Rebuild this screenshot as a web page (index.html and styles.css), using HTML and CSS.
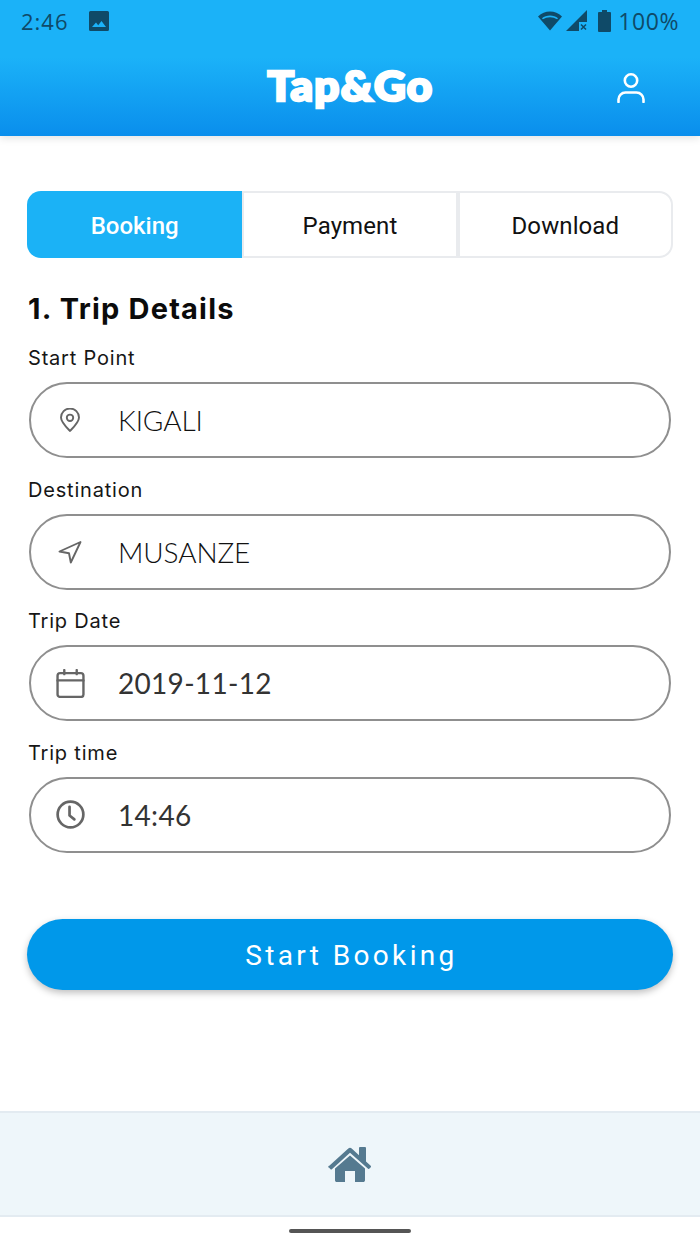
FILE: index.html
```html
<!DOCTYPE html>
<html lang="en">
<head>
<meta charset="utf-8">
<title>Tap&amp;Go</title>
<link rel="stylesheet" href="styles.css">
</head>
<body>
<div class="app">
  <header class="header">
    <div class="status">
      <div class="status-left">
        <span class="clock">2:46</span>
        <svg class="st-img" viewBox="0 0 20 20"><path d="M1.5 0h17A1.5 1.5 0 0 1 20 1.500v17a1.500 1.500 0 0 1-1.500 1.500h-17A1.500 1.500 0 0 1 0 18.500v-17A1.500 1.500 0 0 1 1.500 0zM3 16h14l-4.500-6-3.300 4.200L7 11.500z" fill="#0f4a68" fill-rule="evenodd"/></svg>
      </div>
      <div class="status-right">
        <svg class="st-wifi" viewBox="0 0 24 20"><path d="M12 19.500L0 5.500C3.500 2.300 7.500.5 12 .5s8.500 1.800 12 5zM12 4.500c-3 0-5.800 1-8 2.800l.9 1C7 7 9.400 6.300 12 6.300s5 .7 7.100 2l.9-1c-2.200-1.800-5-2.800-8-2.800z" fill="#0f4a68" fill-rule="evenodd"/></svg>
        <svg class="st-signal" viewBox="0 0 21 21"><path d="M0 21L21 0v12h-8v9z" fill="#0f4a68"/><path d="M15 14.500l5 5m0-5l-5 5" stroke="#0f4a68" stroke-width="1.500"/></svg>
        <svg class="st-batt" viewBox="0 0 13 22"><path d="M4 0h5v2h3a1 1 0 0 1 1 1v18a1 1 0 0 1-1 1H1a1 1 0 0 1-1-1V3a1 1 0 0 1 1-1h3z" fill="#0f4a68"/></svg>
        <span class="pct">100%</span>
      </div>
    </div>
    <div class="brand-row">
      <span class="logo">Tap&amp;Go</span>
      <svg class="user" viewBox="0 0 28 30" fill="none" stroke="#fff" stroke-width="2.600" stroke-linecap="round"><circle cx="14" cy="7.500" r="6.200"/><path d="M1.500 29v-2.500a7 7 0 0 1 7-7h11a7 7 0 0 1 7 7V29"/></svg>
    </div>
  </header>

  <main class="main">
    <nav class="tabs">
      <div class="tab active">Booking</div>
      <div class="tab">Payment</div>
      <div class="tab">Download</div>
    </nav>
    <h1 class="title">1. Trip Details</h1>

    <div class="field">
      <div class="label">Start Point</div>
      <div class="input">
        <span class="ico"><svg class="ic" viewBox="0 0 24 24" fill="none" stroke="#666" stroke-width="1.900" stroke-linejoin="round"><path d="M12 23c-1-1.200-9-8.500-9-13.500a9 9 0 0 1 18 0C21 14.500 13 21.800 12 23z"/><circle cx="12" cy="9.800" r="3.200"/></svg></span>
        <span class="val lt">KIGALI</span>
      </div>
    </div>
    <div class="field">
      <div class="label">Destination</div>
      <div class="input">
        <span class="ico"><svg class="ic" viewBox="0 0 24 24" fill="none" stroke="#666" stroke-width="1.900" stroke-linejoin="round"><path d="M22.500 2L1.500 11.500l9.500 1.800 1.800 9.200z"/></svg></span>
        <span class="val lt">MUSANZE</span>
      </div>
    </div>
    <div class="field">
      <div class="label">Trip Date</div>
      <div class="input">
        <span class="ico"><svg class="ic-lg" viewBox="0 0 28 28" fill="none" stroke="#666" stroke-width="2.300" stroke-linecap="round" stroke-linejoin="round"><rect x="1.500" y="4" width="25" height="23" rx="2.500"/><path d="M1.500 11h25M8 1v4M20 1v4"/></svg></span>
        <span class="val">2019-11-12</span>
      </div>
    </div>
    <div class="field">
      <div class="label">Trip time</div>
      <div class="input">
        <span class="ico"><svg class="ic-lg" viewBox="0 0 30 30" fill="none" stroke="#666" stroke-width="2.800" stroke-linecap="round" stroke-linejoin="round"><circle cx="15" cy="15" r="13.300"/><path d="M14 7v9l5 4"/></svg></span>
        <span class="val">14:46</span>
      </div>
    </div>

    <button class="cta">Start Booking</button>
  </main>

  <footer class="footer">
    <svg class="home" viewBox="0 0 44 36"><path d="M22 9.500L7 22.500v11.700c0 1 .8 1.800 1.800 1.800H17V25h10v11h8.200c1 0 1.800-.8 1.800-1.800V22.500z" fill="#557a90"/><path d="M1.300 19.800L20.300 2.600a2.600 2.600 0 0 1 3.400 0l7.300 6.600V2a1 1 0 0 1 1-1h5a1 1 0 0 1 1 1v13.600l4.700 4.200a1 1 0 0 1 .1 1.400l-1.300 1.400a1 1 0 0 1-1.400.1L22 6.800 3.900 23.300a1 1 0 0 1-1.400-.1l-1.300-1.400a1 1 0 0 1 .1-2z" fill="#557a90"/></svg>
  </footer>
  <div class="nav-bar"><span class="pill"></span></div>
</div>
</body>
</html>
```
FILE: styles.css
```css
* { box-sizing: border-box; }
html, body { margin: 0; padding: 0; background: #fff; }
.app { width: 700px; height: 1244px; display: flex; flex-direction: column; font-family: Roboto, "Liberation Sans", sans-serif; overflow: hidden; }

.header { height: 136px; flex: none; background: linear-gradient(180deg, #1bb2f8 0, #1bb2f8 42%, #0a8eec 100%); box-shadow: 0 2px 8px rgba(0,0,0,.12); padding: 0 21px; position: relative; }
.status { height: 41px; display: flex; justify-content: space-between; align-items: center; color: #0f4a68; }
.status-left { display: flex; align-items: center; gap: 20px; }
.clock { font-size: 22px; letter-spacing: 1px; font-family: "Open Sans", sans-serif; }
.st-img { width: 20px; height: 20px; display: block; }
.status-right { display: flex; align-items: center; }
.st-wifi { width: 24px; height: 20px; margin-right: 4px; display: block; }
.st-signal { width: 21px; height: 21px; margin-right: 11px; display: block; }
.st-batt { width: 13px; height: 22px; margin-right: 7px; display: block; }
.pct { font-size: 23px; font-family: "Open Sans", sans-serif; letter-spacing: .6px; }

.brand-row { height: 95px; display: grid; grid-template-columns: 1fr auto 1fr; align-items: center; padding-bottom: 6px; }
.logo { grid-column: 2; color: #fff; font-family: Lato, sans-serif; font-weight: 900; font-size: 41px; line-height: 1; -webkit-text-stroke: 2.600px #fff; letter-spacing: 1.200px; transform: scaleX(1.07); }
.user { grid-column: 3; justify-self: end; width: 28px; height: 30px; margin: 4px 34px 0 0; display: block; }

.main { flex: 1; padding: 55px 27px 0; }
.tabs { display: grid; grid-template-columns: repeat(3, 1fr); height: 67px; }
.tab { display: flex; align-items: center; justify-content: center; padding-top: 2px; border: 2px solid #e9ebee; border-left-width: 0; font-size: 24px; color: #111; letter-spacing: .1px; }
.tab:last-child { border-radius: 0 14px 14px 0; }
.tab + .tab { border-left: 2px solid #e9ebee; }
.tab.active { background: #1bb2f6; color: #fff; border: 0; border-radius: 14px 0 0 14px; font-weight: 500; letter-spacing: 0; }

.title { margin: 31px 0 16px 1px; font-family: Inter, sans-serif; font-size: 29px; line-height: 40px; font-weight: 700; color: #0b0b0b; letter-spacing: 1.200px; }
.field { margin-bottom: 18.500px; }
.label { font-family: Inter, sans-serif; font-size: 20px; line-height: 26px; color: #161616; letter-spacing: .8px; margin: 0 0 11px 1px; }
.input { height: 76px; margin: 0 2px; border: 2px solid #8f8f8f; border-radius: 38px; display: flex; align-items: center; padding-left: 19px; }
.ico { width: 40px; height: 40px; display: flex; align-items: center; justify-content: center; margin-right: 28px; flex: none; }
.ic { width: 24px; height: 24px; display: block; }
.ic-lg { width: 29px; height: 29px; display: block; }
.val { font-family: Lato, sans-serif; font-size: 28px; color: #333; letter-spacing: .3px; }
.val.lt { font-weight: 300; color: #111; letter-spacing: -.1px; }

.cta { display: block; width: 100%; height: 71px; margin-top: 66px; padding: 3px 0 0 3px; border: 0; border-radius: 36px; background: #0098ea; color: #fff; font-family: Roboto, sans-serif; font-size: 28px; letter-spacing: 3.350px; box-shadow: 0 3px 7px rgba(0,0,0,.25); }

.footer { height: 106px; flex: none; background: #eef6fa; border-top: 2px solid #e3ebf1; border-bottom: 2px solid #e3ebf1; display: flex; align-items: center; justify-content: center; }
.home { width: 44px; height: 36px; display: block; }
.nav-bar { height: 27px; flex: none; display: flex; justify-content: center; align-items: center; padding-top: 1px; }
.pill { width: 122px; height: 4px; border-radius: 2px; background: #555; }
```
